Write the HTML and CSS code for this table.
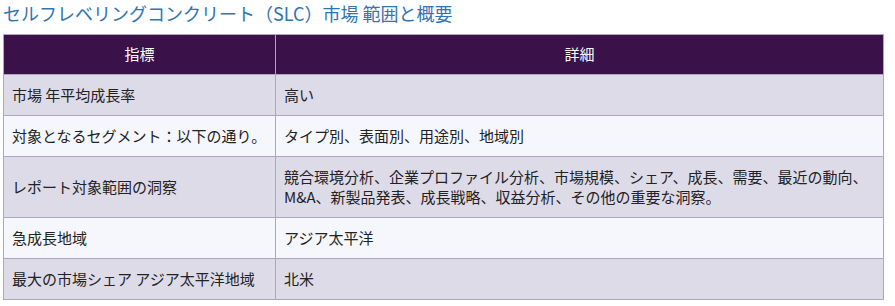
FILE: index.html
```html
<!DOCTYPE html>
<html lang="ja">
<head>
<meta charset="utf-8">
<title>SLC 市場 範囲と概要</title>
<link rel="stylesheet" href="styles.css">
</head>
<body>
<div class="page">
  <h2 class="title">セルフレベリングコンクリート（SLC）市場 範囲と概要</h2>
  <table class="scope">
    <thead>
      <tr><th class="col-metric">指標</th><th>詳細</th></tr>
    </thead>
    <tbody>
      <tr><td>市場 年平均成長率</td><td>高い</td></tr>
      <tr><td>対象となるセグメント：以下の通り。</td><td>タイプ別、表面別、用途別、地域別</td></tr>
      <tr><td>レポート対象範囲の洞察</td><td>競合環境分析、企業プロファイル分析、市場規模、シェア、成長、需要、最近の動向、M&amp;A、新製品発表、成長戦略、収益分析、その他の重要な洞察。</td></tr>
      <tr><td>急成長地域</td><td>アジア太平洋</td></tr>
      <tr><td>最大の市場シェア アジア太平洋地域</td><td>北米</td></tr>
    </tbody>
  </table>
</div>
</body>
</html>
```

FILE: styles.css
```css
html, body {
  margin: 0;
  padding: 0;
  background: #ffffff;
}
.page {
  padding: 0 11px 0 3px;
  font-family: "Noto Sans CJK JP", "Noto Sans", sans-serif;
}
.title {
  margin: 0 0 8px 0;
  font-size: 18px;
  line-height: 26px;
  font-weight: normal;
  color: #2f74b5;
  white-space: nowrap;
}
.scope {
  width: 881px;
  border-collapse: collapse;
  border: 1px solid #aca5c4;
  font-size: 15px;
  line-height: 20px;
  color: #222222;
}
.scope th, .scope td {
  border: 1px solid #aca5c4;
  padding: 10px 8px;
  text-align: left;
  vertical-align: middle;
}
.scope th {
  background: #3a1148;
  color: #ffffff;
  font-weight: normal;
  text-align: center;
  padding: 9px 8px 10px;
}
.scope .col-metric {
  width: 255px;
}
.scope tbody tr:nth-child(odd) td {
  background: #dedbe9;
}
.scope tbody tr:nth-child(even) td {
  background: #f5f7fc;
}
```
